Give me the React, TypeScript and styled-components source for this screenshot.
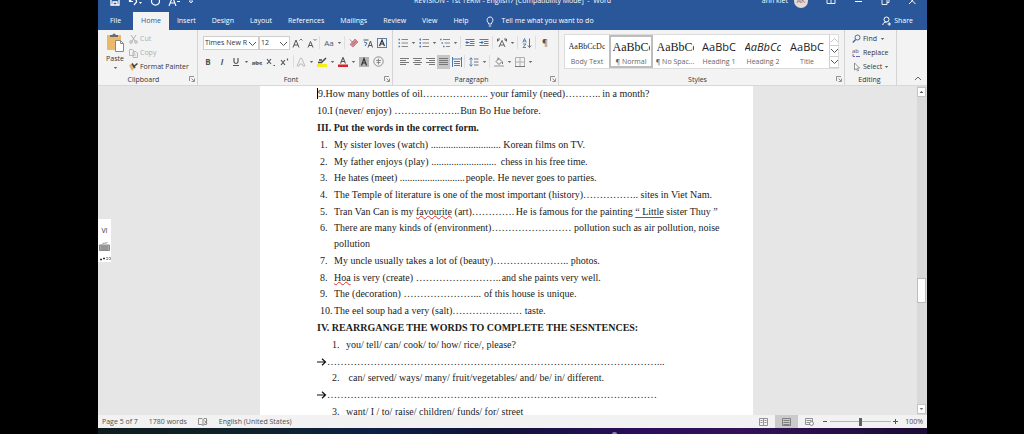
import React from "react";
import styled, { createGlobalStyle } from "styled-components";

const GlobalStyle = createGlobalStyle`
  * { box-sizing: border-box; }
  body {
    margin: 0;
    background: #000;
    font-family: "Open Sans", "Noto Sans", sans-serif;
    font-size: 7px;
    line-height: 10px;
    color: #333;
  }
  button, select, input { font: inherit; color: inherit; }
  button { border: 0; padding: 0; background: none; }
`;

const Frame = styled.div`
  height: 100vh;
  margin: 0 97px 0 98px;
  display: flex;
  flex-direction: column;
  overflow: hidden;
`;

/* ---------- title bar and tabs ---------- */

const Header = styled.header`
  background: #2a579a;
  color: #fff;
`;

const TitleBar = styled.div`
  height: 12px;
  overflow: hidden;
  display: flex;
  align-items: flex-end;
`;

const TitleRow = styled.div`
  flex: 1;
  height: 22px;
  display: grid;
  grid-template-columns: 1fr auto 1fr;
  align-items: center;
`;

const QuickAccess = styled.div`
  display: flex;
  align-items: center;
  gap: 8px;
  padding-left: 12px;
`;

const Title = styled.span`
  white-space: nowrap;
`;

const Account = styled.div`
  display: flex;
  align-items: center;
  justify-content: flex-end;
  gap: 6px;
  padding-right: 10px;
`;

const Avatar = styled.span`
  width: 14px;
  height: 14px;
  border-radius: 50%;
  background: #e3d9d5;
  color: #9a6a5c;
  text-align: center;
  line-height: 14px;
`;

const WindowButtons = styled.div`
  display: flex;
  gap: 17px;
  padding-left: 12px;
`;

const TabRow = styled.nav`
  display: flex;
  height: 18px;
  padding-left: 4px;
`;

const Tab = styled.button<{ $active?: boolean }>`
  padding: 0 8px;
  margin-left: ${(p) => (p.$active ? "4px" : "0")};
  height: 18px;
  background: ${(p) => (p.$active ? "#f3f3f3" : "transparent")};
  color: ${(p) => (p.$active ? "#2a579a" : "#fff")};
`;

const TellMe = styled.button`
  display: flex;
  align-items: center;
  gap: 8px;
  margin-left: 9px;
`;

const Share = styled.button`
  display: flex;
  align-items: center;
  gap: 3px;
  margin: 0 14px 0 auto;
`;

/* ---------- ribbon ---------- */

const Ribbon = styled.section`
  display: flex;
  height: 56px;
  flex: none;
  background: #f3f3f3;
  border-bottom: 1px solid #d8d8d8;
`;

const Group = styled.div<{ $width: number }>`
  width: ${(p) => p.$width}px;
  flex: none;
  display: flex;
  flex-direction: column;
  border-right: 1px solid #d4d4d4;
`;

const GroupBody = styled.div`
  flex: 1;
  padding: 3px 3px 0;
`;

const GroupFoot = styled.div`
  display: flex;
  align-items: center;
  height: 10px;
  padding-right: 2px;
`;

const GroupName = styled.span`
  flex: 1;
  text-align: center;
`;

const Tools = styled.div<{ $indent?: number }>`
  display: flex;
  align-items: center;
  height: 19px;
  padding-left: ${(p) => p.$indent ?? 0}px;
`;

const Tool = styled.button<{ $narrow?: boolean; $active?: boolean }>`
  width: ${(p) => (p.$narrow ? 13 : 14)}px;
  height: 14px;
  display: flex;
  align-items: center;
  justify-content: center;
  flex: none;
  background: ${(p) => (p.$active ? "#c6c6c6" : "transparent")};
`;

const CaretButton = styled.button`
  width: 7px;
  height: 14px;
  flex: none;
  display: flex;
  align-items: center;
  justify-content: center;
`;

const Separator = styled.span<{ $tight?: boolean }>`
  width: 1px;
  height: 13px;
  flex: none;
  background: #dedede;
  margin: 0 ${(p) => (p.$tight ? 0 : 2)}px 0 1px;
`;

const SelectBox = styled.label<{ $width: number }>`
  position: relative;
  width: ${(p) => p.$width}px;
  height: 14px;
  flex: none;
  background: #fff;
  border: 1px solid #cfcfcf;
  display: flex;

  select {
    appearance: none;
    border: 0;
    outline: 0;
    padding: 0 10px 0 1px;
    width: 100%;
    background: transparent;
    line-height: 12px;
  }
  svg {
    position: absolute;
    right: 1px;
    top: 4px;
    pointer-events: none;
  }
`;

const ClipboardBody = styled.div`
  flex: 1;
  display: flex;
  padding: 2px 0 0 6px;
`;

const EditingBody = styled(ClipboardBody)`
  padding-left: 4px;
`;

const PasteButton = styled.button`
  width: 22px;
  display: flex;
  flex-direction: column;
  align-items: center;
  gap: 2px;
`;

const Stack = styled.div`
  display: flex;
  flex-direction: column;
  padding-left: 3px;
`;

const StackButton = styled.button<{ $muted?: boolean }>`
  display: flex;
  align-items: center;
  gap: 2px;
  height: 14px;
  white-space: nowrap;
  color: ${(p) => (p.$muted ? "#adadad" : "#333")};
`;

const Gallery = styled.div`
  display: flex;
  margin: 1px 2px 0 2px;
  height: 35px;
  background: #fff;
  border: 1px solid #dcdcdc;
`;

const StyleCard = styled.button<{ $active?: boolean }>`
  width: 44px;
  flex: none;
  display: flex;
  flex-direction: column;
  align-items: center;
  justify-content: flex-end;
  gap: 4px;
  overflow: hidden;
  white-space: nowrap;
  line-height: 8px;
  color: #666;
  border: 2px solid ${(p) => (p.$active ? "#bdbdbd" : "transparent")};
`;

const Sample = styled.span<{ $kind: "small" | "serif" | "sans" | "italic" }>`
  max-width: 37px;
  overflow: hidden;
  line-height: 14px;
  color: #222;
  font-family: ${(p) =>
    p.$kind === "small" || p.$kind === "serif"
      ? '"Liberation Serif", serif'
      : '"Open Sans", sans-serif'};
  font-size: ${(p) => (p.$kind === "small" ? 8 : p.$kind === "serif" ? 12 : 11)}px;
  font-style: ${(p) => (p.$kind === "italic" ? "italic" : "normal")};
`;

const GalleryArrows = styled.div`
  flex: 1;
  display: flex;
  flex-direction: column;
  button {
    flex: 1;
    display: flex;
    align-items: center;
    justify-content: center;
    border-left: 1px solid #cfcfcf;
    border-bottom: 1px solid #cfcfcf;
  }
`;

const RibbonEnd = styled.div`
  flex: 1;
  display: flex;
  align-items: flex-end;
  justify-content: flex-end;
  padding: 0 5px 1px;
`;

/* ---------- document ---------- */

const Workspace = styled.main`
  position: relative;
  flex: 1;
  min-height: 0;
  display: flex;
  background: #e6e6e6;
`;

const Canvas = styled.div`
  flex: 1;
  overflow: hidden;
  padding-right: 2px;
`;

const Sheet = styled.article`
  width: 493px;
  min-height: 100%;
  margin: -1px auto 0;
  padding: 0 30px 0 57px;
  background: #fff;
  color: #1c1c1c;
  font-family: "Liberation Serif", "Times New Roman", serif;
  font-size: 10px;
  line-height: 17px;
  white-space: nowrap;

  p, h2 { margin: 0; }
  h2 { font-size: 10px; font-weight: 700; line-height: 17px; }
`;

const TextCursor = styled.span`
  border-left: 1px solid #000;
`;

const Questions = styled.ol`
  list-style: none;
  margin: 0;
  padding: 0;
  li:nth-child(3n) { line-height: 16px; }
`;

const Question = styled.li<{ $deep?: boolean }>`
  display: flex;
  padding-left: ${(p) => (p.$deep ? 15 : 3)}px;
`;

const Num = styled.span`
  width: 14px;
  flex: none;
`;

const Blank = styled.span<{ $width: number }>`
  display: inline-block;
  width: ${(p) => p.$width}px;
`;

const Misspelt = styled.span`
  text-decoration: underline wavy #d33 1px;
  text-underline-offset: 0;
`;

const Grammar = styled.span`
  text-decoration: underline solid #3b62c4 1px;
  text-underline-offset: 2px;
`;

const AnswerLine = styled.li`
  display: flex;
  align-items: center;
`;

const ScrollBar = styled.div`
  width: 10px;
  flex: none;
  display: flex;
  flex-direction: column;
  justify-content: space-between;
  padding: 1px 1px 1px 0;
  background: #d9d9d9;
`;

const ScrollArrow = styled.button`
  height: 10px;
  display: flex;
  align-items: center;
  justify-content: center;
  background: #fff;
  border: 1px solid #c4c4c4;
`;

const ScrollTrack = styled.div`
  flex: 1;
  display: flex;
  flex-direction: column;
`;

const ScrollThumb = styled.div`
  height: 25px;
  background: #fdfdfd;
  border: 1px solid #bcbcbc;
`;

const Space = styled.div<{ $grow: number }>`
  flex: ${(p) => p.$grow} 0 0;
`;

const InputBadge = styled.aside`
  position: absolute;
  left: 0;
  top: 133px;
  width: 13px;
  height: 43px;
  background: #fff;
  display: flex;
  flex-direction: column;
  align-items: center;
  justify-content: space-between;
  padding: 7px 0 1px;
`;

/* ---------- status bar ---------- */

const StatusBar = styled.footer`
  height: 13px;
  flex: none;
  display: flex;
  align-items: center;
  padding: 0 4px;
  background: #f2f2f2;
  color: #505050;
`;

const StatusItem = styled.button`
  margin-right: 11px;
  display: flex;
  align-items: center;
`;

const ViewButton = styled.button<{ $active?: boolean }>`
  width: 23px;
  height: 13px;
  display: flex;
  align-items: center;
  justify-content: center;
  background: ${(p) => (p.$active ? "#cbcbcb" : "transparent")};
`;

const Views = styled.div`
  display: flex;
  margin-left: auto;
`;

const Zoom = styled.label`
  display: flex;
  align-items: center;
  gap: 2px;
  padding-left: 2px;
  input {
    appearance: none;
    width: 61px;
    height: 9px;
    margin: 0;
    background: linear-gradient(#b5b5b5, #b5b5b5) center / 100% 1px no-repeat;
  }
  input::-webkit-slider-thumb {
    appearance: none;
    width: 3px;
    height: 8px;
    background: #606060;
  }
`;

const ZoomValue = styled.span`
  margin-left: 7px;
`;

const Taskbar = styled.div`
  height: 6px;
  flex: none;
  display: flex;
  justify-content: center;
  align-items: flex-end;
  padding-left: 204px;
  background: linear-gradient(90deg, #0d1c1f 0%, #10222c 20%, #0c1f45 33%, #101338 48%, #2b0d5c 66%, #331258 78%, #1b0b35 100%);
`;

const TaskMark = styled.span`
  width: 5px;
  height: 2px;
  border-radius: 2px 2px 0 0;
  background: #8f7fa8;
`;

/* ---------- icons ---------- */

const Svg = ({ w = 10, h = 10, children }: { w?: number; h?: number; children: React.ReactNode }) => (
  <svg width={w} height={h} viewBox={`0 0 ${w} ${h}`} fill="none" stroke="#666" strokeWidth="1" aria-hidden="true">
    {children}
  </svg>
);

const CaretIcon = () => (
  <Svg w={5} h={4}><path d="M.8 1h3.4L2.5 3z" fill="#666" stroke="none" /></Svg>
);
const Caret = ({ label }: { label: string }) => (
  <CaretButton aria-label={label}><CaretIcon /></CaretButton>
);
const Chevron = ({ up = false, color = "#555" }: { up?: boolean; color?: string }) => (
  <Svg w={9} h={6}><path d={up ? "M1 5l3.500-3.500L8 5" : "M1 1l3.500 3.500L8 1"} stroke={color} /></Svg>
);
const Launcher = ({ label }: { label: string }) => (
  <button aria-label={label}>
    <Svg w={6} h={6}><path d="M.5 5V.5H5M2.500 2.500L5 5M5.500 2.500v3h-3" stroke="#777" strokeWidth=".8" /></Svg>
  </button>
);
const Glyph = ({ ch, bold, italic, color = "#555", size = 9 }: { ch: string; bold?: boolean; italic?: boolean; color?: string; size?: number }) => (
  <svg width="12" height="12" viewBox="0 0 12 12" aria-hidden="true">
    <text x="6" y="9" textAnchor="middle" fontSize={size} fontWeight={bold ? 700 : 400} fontStyle={italic ? "italic" : "normal"} fill={color}>{ch}</text>
  </svg>
);

const PasteIcon = () => (
  <Svg w={20} h={20}>
    <rect x="2" y="3" width="14" height="15" fill="#eab96c" stroke="none" />
    <path d="M5 5V3h2.500a1.600 1.600 0 013.200 0H13v2z" fill="#6b6b6b" stroke="none" />
    <path d="M10.500 8.500h5l3 3v8h-8z" fill="#fff" stroke="#8a8a8a" />
    <path d="M15.500 8.500v3h3" stroke="#8a8a8a" />
  </Svg>
);
const CutIcon = () => (
  <Svg w={9} h={10}>
    <path d="M2 1l4 6M7 1L3 7" stroke="#b0b0b0" />
    <circle cx="2" cy="8" r="1.300" stroke="#b0b0b0" /><circle cx="7" cy="8" r="1.300" stroke="#b0b0b0" />
  </Svg>
);
const CopyIcon = () => (
  <Svg w={9} h={10}>
    <path d="M.5 1.500h3l1.500 1.500v4.500H.5zM4 3.500h3L8.500 5v4.500H4z" fill="#f3f3f3" stroke="#b8b8b8" />
    <path d="M5.200 6h2M5.200 7.700h2" stroke="#c4c4c4" strokeWidth=".6" />
  </Svg>
);
const PainterIcon = () => (
  <Svg w={9} h={10}>
    <path d="M0 3l3-1 2.500 4L3 9z" fill="#e6b366" stroke="none" />
    <path d="M3 1.500l3 4.500M5.500 4L8.500 1.500" stroke="#444" strokeWidth="1.600" />
  </Svg>
);

type ListKind = "bullet" | "number" | "multi";
const ListIcon = ({ kind }: { kind: ListKind }) => (
  <Svg>
    {[1.5, 5, 8.5].map((y, i) => (
      <React.Fragment key={y}>
        <path d={`M${kind === "multi" ? i * 1.5 : 0.5} ${y}h1.500`} stroke="#5b7fb5" strokeWidth="1.400" />
        <path d={`M${kind === "multi" ? 3 + i * 1.5 : 3.5} ${y}H10`} stroke="#888" />
      </React.Fragment>
    ))}
    {kind === "number" && <path d="M1.300.5v2M1.300 4v2M1.300 7.500v2" stroke="#5b7fb5" strokeWidth=".8" />}
  </Svg>
);
const AlignIcon = ({ rows }: { rows: [number, number][] }) => (
  <Svg w={9} h={9}>
    {rows.map(([a, b], i) => <path key={i} d={`M${a} ${1.5 + i * 2}H${b}`} stroke="#777" />)}
  </Svg>
);
const IndentIcon = ({ out }: { out?: boolean }) => (
  <Svg>
    <path d="M.5 1.500h9M5 3.500h4.500M5 5.500h4.500M.5 7.500h9" stroke="#777" />
    <path d={out ? "M4.500 4.500H1M2.500 3L1 4.500 2.500 6" : "M.3 4.500H4M2.500 3L4 4.500 2.500 6"} stroke="#3f6cb0" />
  </Svg>
);

const L: [number, number][] = [[0, 9], [0, 6], [0, 9], [0, 6]];
const C: [number, number][] = [[0, 9], [1.5, 7.5], [0, 9], [1.5, 7.5]];
const R: [number, number][] = [[0, 9], [3, 9], [0, 9], [3, 9]];
const J: [number, number][] = [[0, 9], [0, 9], [0, 9], [0, 9]];

/* A dotted gap: ellipses are 10px wide, full stops a quarter of that. */
const Gap = ({ width, dense }: { width: number; dense?: boolean }) => {
  const ellipses = dense ? 0 : Math.floor(width / 10);
  const stops = Math.floor((width - ellipses * 10) / 2.5);
  return <Blank $width={width}>{"…".repeat(ellipses) + ".".repeat(stops)}</Blank>;
};

const STYLES: { sample: string; name: string; kind: "small" | "serif" | "sans" | "italic"; active?: boolean }[] = [
  { sample: "AaBbCcDc", name: "Body Text", kind: "small" },
  { sample: "AaBbCc", name: "¶ Normal", kind: "serif", active: true },
  { sample: "AaBbCc", name: "¶ No Spac...", kind: "serif" },
  { sample: "AaBbC", name: "Heading 1", kind: "sans" },
  { sample: "AaBbCc", name: "Heading 2", kind: "italic" },
  { sample: "AaBbC", name: "Title", kind: "sans" },
];

const TABS = ["File", "Home", "Insert", "Design", "Layout", "References", "Mailings", "Review", "View", "Help"];

const FORM_QUESTIONS: React.ReactNode[] = [
  <>My sister loves (watch) <Gap dense width={70} /> Korean films on TV.</>,
  <>My father enjoys (play) <Gap dense width={67} /> chess in his free time.</>,
  <>He hates (meet) <Gap dense width={66} />people. He never goes to parties.</>,
  <>The Temple of literature is one of the most important (history)<Gap width={55} /> sites in Viet Nam.</>,
  <>Tran Van Can is my <Misspelt>favourite</Misspelt> (art)<Gap width={44} />He is famous for the painting <Grammar>“ Little</Grammar> sister Thuy ”</>,
  <>There are many kinds of (environment)<Gap width={80} /> pollution such as air pollution, noise<br />pollution</>,
  <>My uncle usually takes a lot of (beauty)<Gap width={75} /> photos.</>,
  <><Misspelt>Hoa</Misspelt> is very (create) <Gap width={86} />and she paints very well.</>,
  <>The (decoration) <Gap width={78} /> of this house is unique.</>,
  <>The eel soup had a very (salt)<Gap width={70} /> taste.</>,
];

const Answer = ({ width }: { width: number }) => (
  <AnswerLine>
    <Svg><path d="M0 5h8.500M5 1.800L8.500 5 5 8.200" stroke="#111" strokeWidth="1.200" /></Svg>
    <Gap width={width} />
  </AnswerLine>
);

export default function App() {
  return (
    <Frame>
      <GlobalStyle />
      <Header>
        <TitleBar>
          <TitleRow>
            <QuickAccess>
              <Svg><path d="M1 1h8v8H1zM3 9V6h4v3" stroke="#fff" strokeWidth="1.300" /></Svg>
              <Svg w={14}><path d="M1.500 2v3.500H5M2 5c2-3 7-2.500 6.500 1L6 9" stroke="#fff" strokeWidth="1.200" /><path d="M11 6h3l-1.500 2z" fill="#fff" stroke="none" /></Svg>
              <Svg><path d="M8 2a4 4 0 11-5 0" stroke="#fff" strokeWidth="1.200" /></Svg>
              <Svg w={12}><path d="M1 10L4.500 1 8 10M2.200 7h4.600M9 5.500h3" stroke="#fff" strokeWidth="1.100" /></Svg>
              <Svg w={6}><path d="M1 5h4L3 7z" stroke="#fff" strokeWidth=".8" /></Svg>
            </QuickAccess>
            <Title>REVISION - 1st TERM - English7 [Compatibility Mode] &nbsp;-&nbsp; Word</Title>
            <Account>
              <span>ann kiet</span>
              <Avatar>AK</Avatar>
              <WindowButtons>
                <Svg><path d="M1 1.500h8v6H1zM5 2v5" stroke="#fff" strokeWidth=".9" /></Svg>
                <Svg><path d="M2 5.500h7" stroke="#fff" /></Svg>
                <Svg><path d="M2 3.500h5v5H2zM4 3V1.500h5v5H7" stroke="#fff" strokeWidth=".9" /></Svg>
                <Svg><path d="M2 1.500l6.500 6.500M8.500 1.500L2 8" stroke="#fff" /></Svg>
              </WindowButtons>
            </Account>
          </TitleRow>
        </TitleBar>
        <TabRow>
          {TABS.map((t) => <Tab key={t} $active={t === "Home"}>{t}</Tab>)}
          <TellMe>
            <Svg w={8} h={11}><path d="M2.500 7C.2 5 .8 1 4 1s3.800 4 1.500 6v1h-3zM2.800 10h2.400" stroke="#fff" strokeWidth=".9" /></Svg>
            Tell me what you want to do
          </TellMe>
          <Share>
            <Svg w={9} h={10}><circle cx="4.500" cy="3.500" r="2.500" stroke="#fff" /><path d="M.7 9C1 7 2.500 6 4.500 6M5.500 8h3.500M7.200 6.300v3.500" stroke="#fff" /></Svg>
            Share
          </Share>
        </TabRow>
      </Header>

      <Ribbon>
        <Group $width={100}>
          <ClipboardBody>
            <PasteButton><PasteIcon />Paste<CaretIcon /></PasteButton>
            <Stack>
              <StackButton $muted><CutIcon />Cut</StackButton>
              <StackButton $muted><CopyIcon />Copy</StackButton>
              <StackButton><PainterIcon />Format Painter</StackButton>
            </Stack>
          </ClipboardBody>
          <GroupFoot><GroupName>Clipboard</GroupName><Launcher label="Clipboard options" /></GroupFoot>
        </Group>

        <Group $width={195}>
          <GroupBody>
            <Tools $indent={2}>
              <SelectBox $width={56}>
                <select aria-label="Font"><option>Times New R</option></select><Chevron />
              </SelectBox>
              <SelectBox $width={31}>
                <select aria-label="Font size"><option>12</option></select><Chevron />
              </SelectBox>
              <Tool aria-label="Grow font"><Svg w={11}><path d="M1 9.500L4 2l3 7.500M2 7h4" stroke="#555" /><path d="M7.500 2.500L9 1l1.500 1.500" stroke="#555" strokeWidth=".8" /></Svg></Tool>
              <Tool aria-label="Shrink font"><Svg w={11}><path d="M2 9.500L4.500 3.500 7 9.500M3 7.500h3" stroke="#555" /><path d="M7.500 1L9 2.500 10.500 1" stroke="#555" strokeWidth=".8" /></Svg></Tool>
              <Separator />
              <Tool aria-label="Change case"><Glyph ch="Aa" size={8} /></Tool><Caret label="Case options" />
              <Separator />
              <Tool aria-label="Clear formatting"><Svg><path d="M1 6.500L6 1l3 3-5 5z" fill="#e48795" stroke="#c8616f" strokeWidth=".7" /><path d="M.8 1.500l3 3M3.500 7l4-4" stroke="#777" strokeWidth=".8" /></Svg></Tool>
              <Tool aria-label="Phonetic guide"><Svg><path d="M.5 2h5M5 9.500L7.500 3l2 6.500M5.700 7.500h3.200" stroke="#555" /><path d="M1 4l3 1L2 8" stroke="#3f6cb0" /></Svg></Tool>
              <Tool aria-label="Character border"><Svg><rect x=".5" y=".5" width="9" height="9" stroke="#5d7fa8" /><path d="M2.500 8L5 2l2.500 6M3.300 6h3.400" stroke="#333" strokeWidth="1.200" /></Svg></Tool>
            </Tools>
            <Tools>
              <Tool aria-label="Bold"><Glyph ch="B" bold size={8} /></Tool>
              <Tool aria-label="Italic"><Glyph ch="I" bold italic size={8} /></Tool>
              <Tool aria-label="Underline"><Svg><path d="M3 1v3.500a2 2 0 004 0V1M2 8.500h6" stroke="#555" strokeWidth="1.200" /></Svg></Tool>
              <Caret label="Underline options" />
              <Tool aria-label="Strikethrough"><Svg w={12}><text x="6" y="8" textAnchor="middle" fontSize="6" fontWeight="700" fill="#666" stroke="none">abc</text><path d="M1 6h10" stroke="#555" strokeWidth=".8" /></Svg></Tool>
              <Tool aria-label="Subscript"><Svg><path d="M1 2l4 5M5 2L1 7M7.500 8.500h1.500" stroke="#555" strokeWidth="1.200" /></Svg></Tool>
              <Tool aria-label="Superscript"><Svg><path d="M1 3l4 5M5 3L1 8M7.500 1.500v2" stroke="#555" strokeWidth="1.200" /></Svg></Tool>
              <Separator $tight />
              <Tool aria-label="Text effects"><Svg><path d="M1 9L4.500 1h1L9 9H7L6.300 7H3.700L3 9z" stroke="#bdbdbd" /></Svg></Tool><Caret label="Effect options" />
              <Tool aria-label="Highlight"><Svg><rect x="0" y="7" width="10" height="3" fill="#f5ee1a" stroke="none" /><path d="M1 5.500h3M4 6l5-5M2 3h3" stroke="#444" strokeWidth="1.500" /></Svg></Tool><Caret label="Highlight options" />
              <Tool aria-label="Font color"><Svg><rect x="0" y="7.500" width="10" height="2.500" fill="#d8232a" stroke="none" /><path d="M2.500 6.500L5 .5l2.500 6M3.200 4.500h3.600" stroke="#555" strokeWidth="1.100" /></Svg></Tool><Caret label="Color options" />
              <Tool aria-label="Character shading"><Svg><rect width="10" height="10" y="0" fill="#b5b5b5" stroke="none" /><path d="M2.500 8.500L5 1.500l2.500 7M3.300 6h3.400" stroke="#333" strokeWidth="1.200" /></Svg></Tool>
              <Tool aria-label="Enclose characters"><Svg w={11} h={11}><circle cx="5.500" cy="5.500" r="4.700" stroke="#777" strokeWidth=".8" /><path d="M3 4.500h5M5.500 2.500v6M3.500 6.500h4" stroke="#777" strokeWidth=".8" /></Svg></Tool>
            </Tools>
          </GroupBody>
          <GroupFoot><GroupName>Font</GroupName><Launcher label="Font options" /></GroupFoot>
        </Group>

        <Group $width={166}>
          <GroupBody>
            <Tools>
              <Tool aria-label="Bullets"><ListIcon kind="bullet" /></Tool><Caret label="Bullet options" />
              <Tool aria-label="Numbering"><ListIcon kind="number" /></Tool><Caret label="Numbering options" />
              <Tool aria-label="Multilevel list"><ListIcon kind="multi" /></Tool><Caret label="Multilevel options" />
              <Separator />
              <Tool aria-label="Decrease indent"><IndentIcon out /></Tool>
              <Tool aria-label="Increase indent"><IndentIcon /></Tool>
              <Separator />
              <Tool aria-label="Asian layout"><Svg><path d="M2 9l3-6.500L8 9M3 7h4M.5 1l1.500 2M9.500 1L8 3M.5 3.500V1H3M9.500 3.500V1H7" stroke="#555" strokeWidth=".9" /></Svg></Tool><Caret label="Layout options" />
              <Separator />
              <Tool aria-label="Sort"><Svg><path d="M.8 4.500L2.500.5l1.700 4M1.300 3h2.400M1 6h3L1 9.500h3" stroke="#4d76b3" strokeWidth=".9" /><path d="M7.500.5v9M5.800 7.500l1.700 2 1.700-2" stroke="#666" strokeWidth=".9" /></Svg></Tool>
              <Separator />
              <Tool aria-label="Show marks"><Glyph ch="¶" size={9} /></Tool>
            </Tools>
            <Tools $indent={2}>
              <Tool $narrow aria-label="Align left"><AlignIcon rows={L} /></Tool>
              <Tool $narrow aria-label="Center"><AlignIcon rows={C} /></Tool>
              <Tool $narrow aria-label="Align right"><AlignIcon rows={R} /></Tool>
              <Tool $narrow $active aria-label="Justify"><AlignIcon rows={J} /></Tool>
              <Tool $narrow aria-label="Distribute"><Svg><path d="M.5 0v10M9.500 0v10M1 2h8" stroke="#4d76b3" /><path d="M2 4.500h6M2 6.500h6M2 8.500h6" stroke="#777" /></Svg></Tool>
              <Separator />
              <Tool aria-label="Line spacing"><Svg><path d="M2 .8v8.400M.5 2.500L2 .8l1.500 1.700M.5 7.500L2 9.200l1.500-1.700" stroke="#4d76b3" strokeWidth=".9" /><path d="M5 2h4.500M5 5h4.500M5 8h4.500" stroke="#777" /></Svg></Tool><Caret label="Spacing options" />
              <Separator />
              <Tool aria-label="Shading"><Svg><path d="M2 4.500L5 1.500l3 3-3 3zM4 3V.5M8.500 5v2" stroke="#777" /><path d="M0 9h10" stroke="#b5b5b5" strokeWidth="1.500" /></Svg></Tool><Caret label="Shading options" />
              <Tool aria-label="Borders"><Svg><path d="M.5.5h9v9h-9zM5 .5v9M.5 5h9" stroke="#b0b0b0" /><path d="M0 9.500h10" stroke="#777" /></Svg></Tool><Caret label="Border options" />
            </Tools>
          </GroupBody>
          <GroupFoot><GroupName>Paragraph</GroupName><Launcher label="Paragraph options" /></GroupFoot>
        </Group>

        <Group $width={286}>
          <GroupBody>
            <Gallery>
              {STYLES.map((s) => (
                <StyleCard key={s.name} $active={s.active}>
                  <Sample $kind={s.kind}>{s.sample}</Sample>
                  {s.name}
                </StyleCard>
              ))}
              <GalleryArrows>
                <button aria-label="Previous styles"><Chevron up color="#c4c4c4" /></button>
                <button aria-label="Next styles"><Chevron /></button>
                <button aria-label="All styles"><Chevron /></button>
              </GalleryArrows>
            </Gallery>
          </GroupBody>
          <GroupFoot><GroupName>Styles</GroupName><Launcher label="Style options" /></GroupFoot>
        </Group>

        <Group $width={52}>
          <EditingBody>
            <Stack>
              <StackButton>
                <Svg w={9}><circle cx="5.500" cy="3.500" r="2.500" stroke="#3f6cb0" /><path d="M3.700 5.500L.8 8.500" stroke="#3f6cb0" strokeWidth="1.400" /></Svg>
                Find<Caret label="Find options" />
              </StackButton>
              <StackButton>
                <Svg w={9}><text x="0" y="5" fontSize="6" fill="#555" stroke="none">ab</text><path d="M1 6v2.500h2M4 8.500h4" stroke="#6f64b0" /></Svg>
                Replace
              </StackButton>
              <StackButton>
                <Svg w={9}><path d="M2.500 1v7l1.700-1.500L5.500 9l1-.5-1-2.500h2z" stroke="#777" strokeWidth=".8" fill="#fff" /></Svg>
                Select<CaretIcon />
              </StackButton>
            </Stack>
          </EditingBody>
          <GroupFoot><GroupName>Editing</GroupName></GroupFoot>
        </Group>
        <RibbonEnd><button aria-label="Collapse ribbon"><Svg w={8} h={5}><path d="M1 4l3-3 3 3" stroke="#666" /></Svg></button></RibbonEnd>
      </Ribbon>

      <Workspace>
        <Canvas>
          <Sheet>
            <p><TextCursor />9.How many bottles of oil<Gap width={65} /> your family (need)<Gap width={37} />in a month?</p>
            <p>10.I (never/ enjoy) <Gap width={66} />Bun Bo Hue before.</p>
            <h2>III. Put the words in the correct form.</h2>
            <Questions>
              {FORM_QUESTIONS.map((q, i) => (
                <Question key={i}><Num>{i + 1}.</Num><span>{q}</span></Question>
              ))}
            </Questions>
            <h2>IV. REARRGANGE THE WORDS TO COMPLETE THE SESNTENCES:</h2>
            <Questions>
              <Question $deep><Num>1.</Num><span>you/ tell/ can/ cook/ to/ how/ rice/, please?</span></Question>
              <Answer width={339} />
              <Question $deep><Num>2.</Num><span>&nbsp;can/ served/ ways/ many/ fruit/vegetables/ and/ be/ in/ different.</span></Question>
              <Answer width={332} />
              <Question $deep><Num>3.</Num><span>want/ I / to/ raise/ children/ funds/ for/ street</span></Question>
            </Questions>
          </Sheet>
        </Canvas>
        <ScrollBar>
          <ScrollArrow aria-label="Scroll up"><Svg w={5} h={4}><path d="M.5 3h4L2.500 1z" fill="#555" stroke="none" /></Svg></ScrollArrow>
          <ScrollTrack><Space $grow={18} /><ScrollThumb /><Space $grow={10} /></ScrollTrack>
          <ScrollArrow aria-label="Scroll down"><CaretIcon /></ScrollArrow>
        </ScrollBar>
        <InputBadge>
          <span>VI</span>
          <Svg w={11} h={9}><path d="M.5 3h10v5.500H.5z" fill="#aaa" stroke="#888" /><path d="M3 2.500C4 0 7 2 8.500.5M2 5h7M2 7h7" stroke="#777" strokeWidth=".8" /></Svg>
          <Svg w={12} h={5}><path d="M1 3.500h2M4 2.500h2" stroke="#333" strokeWidth="1.300" /><path d="M7 1.500h2v2H7M10 1.500h1.500v2H10" stroke="#777" strokeWidth=".7" /></Svg>
        </InputBadge>
      </Workspace>

      <StatusBar>
        <StatusItem>Page 5 of 7</StatusItem>
        <StatusItem>1780 words</StatusItem>
        <StatusItem aria-label="Proofing"><Svg w={10} h={9}><path d="M.5 1.500h3.500L5 2.500v6L4 7.500H.5zM5 2.500l1-1h2.500v6H6l-1 1M6.500 3.500l2.500 3M9 3.500l-2.500 3" stroke="#777" strokeWidth=".8" /></Svg></StatusItem>
        <StatusItem>English (United States)</StatusItem>
        <Views>
          <ViewButton aria-label="Read mode"><Svg w={9} h={8}><path d="M.5.5h8v7h-8zM4.500.5v7M1.500 2.500h2M1.500 4.500h2M5.500 2.500h2M5.500 4.500h2" stroke="#888" strokeWidth=".9" /></Svg></ViewButton>
          <ViewButton $active aria-label="Print layout"><Svg w={9} h={8}><path d="M.5.5h8v7h-8zM1.500 2.500h6M1.500 4.500h6M1.500 6.500h6" stroke="#777" strokeWidth=".9" /></Svg></ViewButton>
          <ViewButton aria-label="Web layout"><Svg w={9} h={8}><path d="M.5.5h7v6h-7zM1.500 2.500h5M1.500 4.500h3" stroke="#888" strokeWidth=".9" /><circle cx="6.500" cy="5.500" r="2" stroke="#777" fill="#f2f2f2" strokeWidth=".8" /></Svg></ViewButton>
        </Views>
        <Zoom>
          <Svg w={5} h={5}><path d="M0 2.500h4" stroke="#555" /></Svg>
          <input type="range" aria-label="Zoom" min="10" max="190" defaultValue="100" />
          <Svg w={5} h={5}><path d="M0 2.500h5M2.500 0v5" stroke="#555" /></Svg>
        </Zoom>
        <ZoomValue>100%</ZoomValue>
      </StatusBar>
      <Taskbar><TaskMark /></Taskbar>
    </Frame>
  );
}
